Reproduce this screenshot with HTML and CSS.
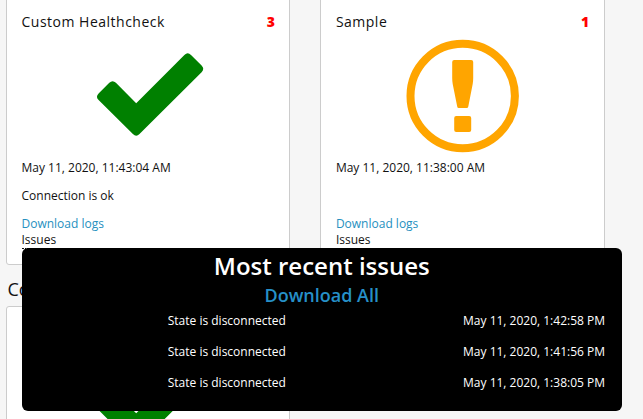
FILE: index.html
```html
<!DOCTYPE html>
<html lang="en">
<head>
<meta charset="utf-8">
<title>Health checks</title>
<link rel="stylesheet" href="styles.css">
</head>
<body>
<main class="page">
  <section class="cards">
    <article class="card">
      <header class="card-head"><h3 class="name">Custom Healthcheck</h3><span class="count">3</span></header>
      <svg class="status ok" viewBox="0 0 112 112"><path d="M10.2 53.5 20.9 42.8Q24.2 39.5 27.5 42.8L47.8 63.3 96 15Q99.300 11.700 102.600 15L113.200 25.600Q116.500 28.900 113.200 32.200L51.100 94.100Q47.800 97.400 44.500 94.100L10.200 60.100Q6.900 56.800 10.200 53.500Z"/></svg>
      <p class="time">May 11, 2020, 11:43:04 AM</p>
      <p class="message">Connection is ok</p>
      <a class="logs">Download logs</a>
      <div class="issues"><span class="issues-label">Issues</span>
        <aside class="popup">
          <h2 class="popup-title">Most recent issues</h2>
          <a class="popup-link">Download All</a>
          <ul class="issue-list">
            <li class="issue"><span class="state">State is disconnected</span><time class="date">May 11, 2020, 1:42:58 PM</time></li>
            <li class="issue"><span class="state">State is disconnected</span><time class="date">May 11, 2020, 1:41:56 PM</time></li>
            <li class="issue"><span class="state">State is disconnected</span><time class="date">May 11, 2020, 1:38:05 PM</time></li>
          </ul>
        </aside>
      </div>
    </article>
    <article class="card">
      <header class="card-head"><h3 class="name">Sample</h3><span class="count">1</span></header>
      <svg class="status warn" viewBox="0 0 112 112"><circle class="ring" cx="56" cy="56" r="52.2"/><path d="M47.500 20H64.500Q66.500 20 66.500 22V38Q66.500 41 66 44L61.600 66.500Q61.300 68 60 68H52Q50.700 68 50.500 66.500L46 44Q45.500 41 45.500 38V22Q45.500 20 47.500 20Z"/><rect x="47.500" y="76" width="17" height="16" rx="2"/></svg>
      <p class="time">May 11, 2020, 11:38:00 AM</p>
      <p class="message"></p>
      <a class="logs">Download logs</a>
      <div class="issues"><span class="issues-label">Issues</span></div>
    </article>
  </section>
  <h2 class="group-title">Co</h2>
  <section class="cards">
    <article class="card">
      <header class="card-head"></header>
      <svg class="status ok" viewBox="0 0 112 112"><path d="M10.2 53.5 20.9 42.8Q24.2 39.5 27.5 42.8L47.8 63.3 96 15Q99.300 11.700 102.600 15L113.200 25.600Q116.500 28.900 113.200 32.200L51.100 94.100Q47.800 97.400 44.500 94.100L10.200 60.100Q6.900 56.800 10.200 53.500Z"/></svg>
    </article>
  </section>
</main>
</body>
</html>
```
FILE: styles.css
```css
* { box-sizing: border-box; }
body { margin: 0; background: #f6f6f6; color: #111; font: 400 12px/16px "Open Sans", sans-serif; }
h2, h3, p, ul { margin: 0; padding: 0; }
.page { height: 419px; padding-left: 6px; overflow: hidden; }
.cards { display: flex; gap: 30px; }
.card { width: 284.4px; height: 269px; margin-top: -4px; padding: 15px 14.5px 0; border: 1px solid #ccc; border-radius: 3px; background: #fff; }
.card-head { display: flex; justify-content: space-between; height: 28px; font-size: 14px; line-height: 20px; }
.name { font-size: 14px; font-weight: 500; letter-spacing: .5px; }
.count { color: red; font-weight: 800; }
.status { display: block; width: 112px; height: 112px; margin: 0 auto; overflow: visible; }
.ok { fill: green; transform: translateX(-3.6px); }
.warn { fill: orange; transform: translateX(-.3px); }
.ring { fill: none; stroke: orange; stroke-width: 8; }
.time { margin-top: 8px; }
.message { height: 16px; margin: 12px 0; }
.logs { display: block; color: #2690c0; }
.issues { position: relative; height: 16px; }
.issues-label { display: inline-block; height: 17px; border-bottom: 1px dotted #111; }
.popup { position: absolute; z-index: 1; top: 16px; left: 0; width: 600px; height: 163px; padding: 1px 16.5px 0 17px; border-radius: 6px; background: #000; color: #fff; text-align: center; font-weight: 400; }
.popup-title { font-size: 24px; line-height: 33px; font-weight: 600; }
.popup-link { display: block; padding-top: 1px; color: #2690c8; font-size: 18px; line-height: 25px; font-weight: 600; }
.issue-list { padding-top: 5px; list-style: none; }
.issue { display: flex; justify-content: space-between; height: 31px; }
.state { width: 247.4px; text-align: right; }
.group-title { height: 41px; padding: 12px 0 0 1.5px; font-size: 18px; line-height: 24px; font-weight: 500; }
.group-title + .cards .card { margin-top: 0; }
```
